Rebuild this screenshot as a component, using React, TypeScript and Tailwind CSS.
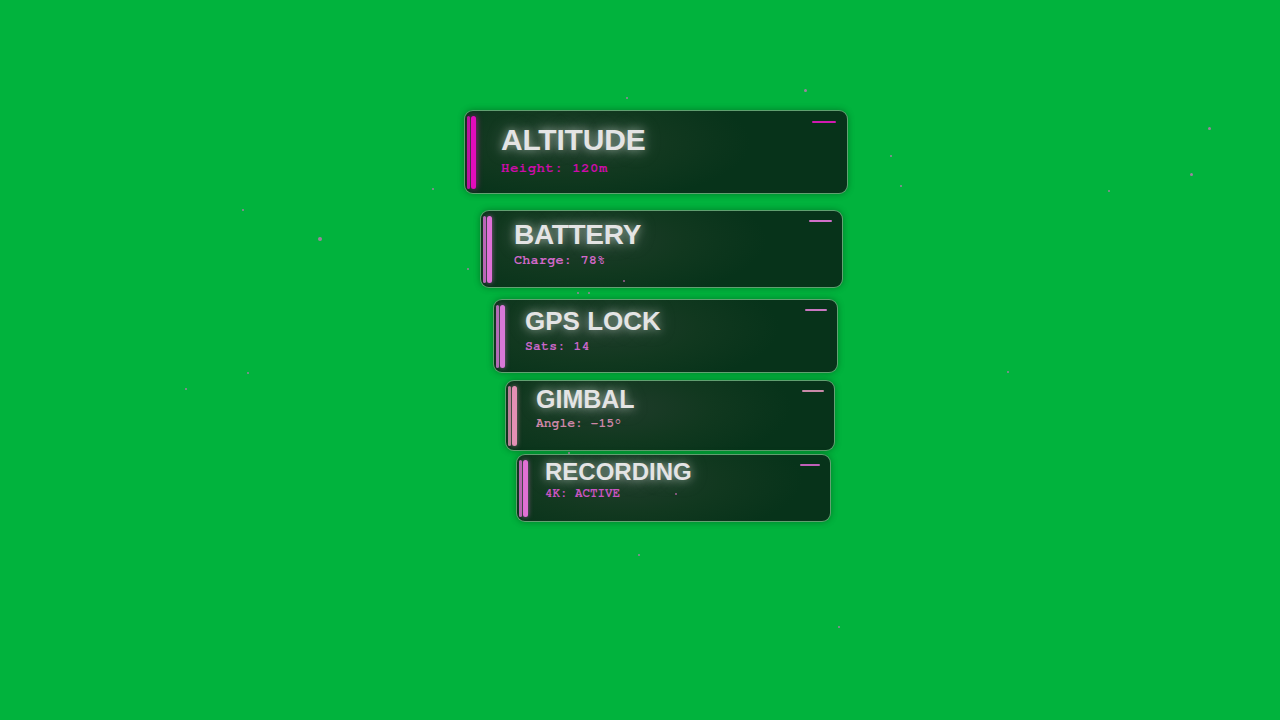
import React from 'react';

type Panel = {
  title: string;
  info: string;
  card: string;
  pad: string;
  titleSize: string;
  gap: string;
  infoSize: string;
  infoColor: string;
  bar: string;
  barGlow: string;
  dash: string;
};

const panels: Panel[] = [
  {
    title: 'ALTITUDE',
    info: 'Height: 120m',
    card: 'ml-[464px] w-[384px] h-[84px]',
    pad: 'pt-[14px] pl-[36px]',
    titleSize: 'text-[30px] tracking-[-0.2px]',
    gap: 'mt-[6px]',
    infoSize: 'text-[14px] tracking-[0.5px]',
    infoColor: 'text-[#cc0ca8]',
    bar: 'bg-[#e20cbc]',
    barGlow: 'shadow-[0_0_6px_rgba(230,20,190,0.7)]',
    dash: 'top-[10px] right-[11px] w-[24px] bg-[#d01ab0]',
  },
  {
    title: 'BATTERY',
    info: 'Charge: 78%',
    card: 'ml-[480px] mt-[16px] w-[363px] h-[78px]',
    pad: 'pt-[10px] pl-[33px]',
    titleSize: 'text-[28px] tracking-[-0.3px]',
    gap: 'mt-[5px]',
    infoSize: 'text-[13.5px] tracking-[0.2px]',
    infoColor: 'text-[#d068c8]',
    bar: 'bg-[#e070d8]',
    barGlow: 'shadow-[0_0_5px_rgba(225,110,215,0.6)]',
    dash: 'top-[9px] right-[10px] w-[23px] bg-[#d070c8]',
  },
  {
    title: 'GPS LOCK',
    info: 'Sats: 14',
    card: 'ml-[493px] mt-[11px] w-[345px] h-[74px]',
    pad: 'pt-[8px] pl-[31px]',
    titleSize: 'text-[26px]',
    gap: 'mt-[6px]',
    infoSize: 'text-[13px] tracking-[0.3px]',
    infoColor: 'text-[#c866c8]',
    bar: 'bg-[#d878d8]',
    barGlow: 'shadow-[0_0_5px_rgba(215,120,215,0.6)]',
    dash: 'top-[9px] right-[10px] w-[22px] bg-[#c878c0]',
  },
  {
    title: 'GIMBAL',
    info: 'Angle: -15°',
    card: 'ml-[505px] mt-[7px] w-[330px] h-[71px]',
    pad: 'pt-[6px] pl-[30px]',
    titleSize: 'text-[25px]',
    gap: 'mt-[5px]',
    infoSize: 'text-[13px]',
    infoColor: 'text-[#cc86a6]',
    bar: 'bg-[#e490b4]',
    barGlow: 'shadow-[0_0_5px_rgba(225,140,180,0.6)]',
    dash: 'top-[9px] right-[10px] w-[22px] bg-[#c88aa8]',
  },
  {
    title: 'RECORDING',
    info: '4K: ACTIVE',
    card: 'ml-[516px] mt-[3px] w-[315px] h-[68px]',
    pad: 'pt-[5px] pl-[28px]',
    titleSize: 'text-[24px]',
    gap: 'mt-[4px]',
    infoSize: 'text-[12.5px]',
    infoColor: 'text-[#c855c0]',
    bar: 'bg-[#e070d4]',
    barGlow: 'shadow-[0_0_5px_rgba(225,110,210,0.6)]',
    dash: 'top-[9px] right-[10px] w-[20px] bg-[#c060b8]',
  },
];

// stray pink specks floating over the green backdrop
const specks: [number, number, number][] = [
  [626, 97, 2], [804, 89, 3], [1208, 127, 3], [890, 155, 2], [900, 185, 2],
  [1190, 173, 3], [1108, 190, 2], [242, 209, 2], [318, 237, 4], [432, 188, 2],
  [467, 268, 2], [247, 372, 2], [185, 388, 2], [1007, 371, 2], [638, 554, 2],
  [838, 626, 2], [577, 292, 2], [588, 292, 2], [623, 280, 2], [675, 493, 2],
  [568, 452, 2],
];

function HudCard({ p }: { p: Panel }) {
  return (
    <div
      className={`relative rounded-[9px] border border-[#86cf96]/70 bg-[#07341a] bg-[radial-gradient(ellipse_180px_62px_at_105px_38%,#203c2b_0%,#11381f_55%,#07331a_100%)] shadow-[0_0_6px_rgba(0,60,20,0.45)] overflow-hidden ${p.card}`}
    >
      <div className="absolute left-[2px] top-[5px] bottom-[4px] flex gap-[1px]">
        <div className={`w-[3px] rounded-full opacity-80 ${p.bar}`} />
        <div className={`w-[5px] rounded-full ${p.bar} ${p.barGlow}`} />
      </div>
      <div className={`absolute h-[2px] rounded-full ${p.dash}`} />
      <div className={p.pad}>
        <div
          className={`font-['Liberation_Sans',Arial,sans-serif] font-bold leading-none text-[#e4e4e4] [text-shadow:0_0_8px_rgba(255,255,255,0.5),0_0_18px_rgba(200,220,210,0.35)] ${p.titleSize}`}
        >
          {p.title}
        </div>
        <div
          className={`${p.gap} font-['Nimbus_Mono_PS','Nimbus_Mono_L','FreeMono','Courier',monospace] font-bold leading-none ${p.infoSize} ${p.infoColor}`}
        >
          {p.info}
        </div>
      </div>
    </div>
  );
}

export default function App() {
  return (
    <div className="relative w-[1280px] h-[720px] overflow-hidden bg-[#01b33d]">
      <div className="flex flex-col pt-[110px]">
        {panels.map((p) => (
          <HudCard key={p.title} p={p} />
        ))}
      </div>
      {specks.map(([x, y, s], i) => (
        <div
          key={i}
          className="absolute rounded-full bg-[#e070c8]/70"
          style={{ left: x, top: y, width: s, height: s }}
        />
      ))}
    </div>
  );
}
